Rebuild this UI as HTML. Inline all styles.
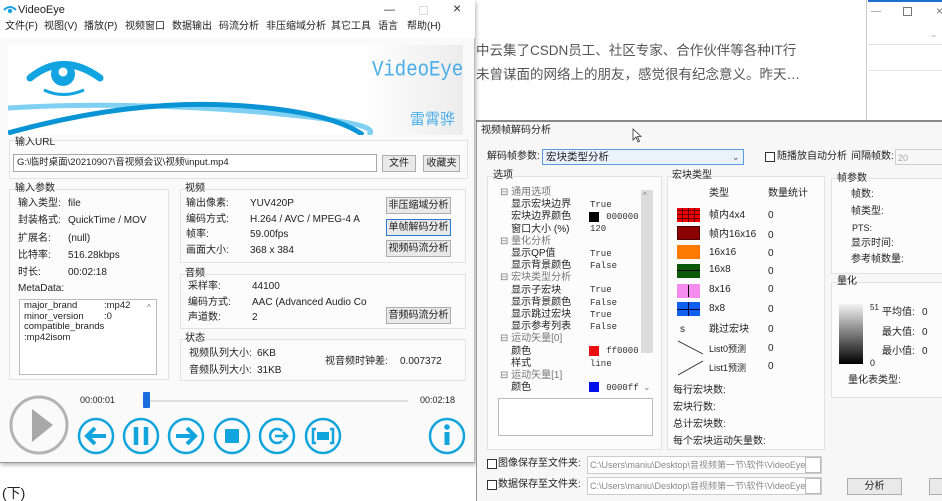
<!DOCTYPE html>
<html><head><meta charset="utf-8"><style>
*{margin:0;padding:0;box-sizing:border-box}
body{width:942px;height:501px;overflow:hidden;background:#fff;font-family:"Liberation Sans","Noto Sans CJK SC",sans-serif;font-size:10px;color:#222;position:relative}
.a{position:absolute;white-space:nowrap;line-height:12px}
.box{position:absolute;border:1px solid #e2e2e2;background:#fbfbfb}
.btn{position:absolute;border:1px solid #adadad;background:#e9e9e9;text-align:center;line-height:14px;font-size:10px}
.inp{position:absolute;border:1px solid #a8a8a8;background:#fff}
.m{font-family:"Liberation Mono","Noto Sans CJK SC",monospace;font-size:9px;color:#333}
.sw{position:absolute;left:677px;width:23px;height:14px}
.g{color:#777}
</style></head><body>
<div class="a" style="left:476px;top:43px;font-size:13.5px;line-height:16px;color:#555">中云集了CSDN员工、社区专家、合作伙伴等各种IT行</div>
<div class="a" style="left:476px;top:67px;font-size:13.5px;line-height:16px;color:#555">未曾谋面的网络上的朋友，感觉很有纪念意义。昨天…</div>
<div style="position:absolute;left:868px;top:0;width:74px;height:2px;background:#1e6fd0"></div>
<div style="position:absolute;left:866px;top:0;width:1px;height:120px;background:#ccc"></div>
<div class="a" style="left:871px;top:6px;color:#888">—</div>
<div style="position:absolute;left:903px;top:7px;width:9px;height:9px;border:1px solid #777"></div>
<div class="a" style="left:936px;top:5px;color:#777;font-size:12px">×</div>
<div class="a" style="left:930px;top:28px;color:#aaa;font-size:9px">⌄</div>
<div style="position:absolute;left:868px;top:44px;width:74px;height:1px;background:#e4e4e4"></div>
<div style="position:absolute;left:868px;top:70px;width:74px;height:1px;background:#e4e4e4"></div>
<div style="position:absolute;left:476px;top:120px;width:466px;height:2px;background:#888"></div>
<div class="a" style="left:2px;top:485px;font-size:14px;line-height:16px">(下)</div>

<div style="position:absolute;left:0;top:0;width:475px;height:463px;background:#fafafa;border-right:1px solid #bbb;border-bottom:1px solid #999;box-shadow:1px 2px 4px rgba(0,0,0,.3)"></div>
<div style="position:absolute;left:0;top:0;width:475px;height:38px;background:#fff"></div>
<svg style="position:absolute;left:3px;top:5px" width="14" height="10" viewBox="0 0 14 10"><path d="M1 5 Q7 -1 13 5" stroke="#1aa0e0" stroke-width="2" fill="none"/><circle cx="7" cy="6" r="2.2" fill="#1aa0e0"/></svg>
<div class="a" style="left:18px;top:4px;font-size:11px">VideoEye</div>
<div class="a" style="left:384px;top:4px;font-size:11px;color:#333">—</div>
<div style="position:absolute;left:419px;top:6px;width:9px;height:9px;border:1px solid #ddd"></div>
<div class="a" style="left:453px;top:2px;font-size:14px;color:#333">×</div>
<div class="a" style="left:5px;top:21px">文件(F)</div>
<div class="a" style="left:44px;top:21px">视图(V)</div>
<div class="a" style="left:84px;top:21px">播放(P)</div>
<div class="a" style="left:125px;top:21px">视频窗口</div>
<div class="a" style="left:172px;top:21px">数据输出</div>
<div class="a" style="left:219px;top:21px">码流分析</div>
<div class="a" style="left:266px;top:21px">非压缩域分析</div>
<div class="a" style="left:331px;top:21px">其它工具</div>
<div class="a" style="left:378px;top:21px">语言</div>
<div class="a" style="left:407px;top:21px">帮助(H)</div>
<div style="position:absolute;left:8px;top:45px;width:455px;height:90px;background:linear-gradient(90deg,#fff 0%,#fff 78%,#ececec 100%);overflow:hidden">
<svg width="455" height="90" viewBox="0 0 455 90">
<path d="M22 33 Q55 6 92 33" stroke="#12a4e0" stroke-width="7" fill="none" stroke-linecap="round"/>
<circle cx="55" cy="29" r="12" fill="#12a4e0"/><circle cx="55" cy="27" r="4.5" fill="#fff"/>
<path d="M36 45 Q55 54 76 45" stroke="#12a4e0" stroke-width="3" fill="none"/>
<path d="M0 63 Q120 56 250 67 T360 90" stroke="#7fd0f2" stroke-width="5" fill="none"/>
<path d="M0 88 Q120 55 220 60 T355 90" stroke="#0a94d6" stroke-width="5" fill="none"/>
</svg>
<div class="a" style="left:364px;top:14px;font-family:'Liberation Mono',monospace;font-size:19px;line-height:22px;color:#4aaeea;transform:scaleY(1.15)">VideoEye</div>
<div class="a" style="left:402px;top:66px;font-size:15px;line-height:18px;color:#4aaeea">雷霄骅</div>
</div>
<div class="box" style="left:9px;top:140px;width:459px;height:39px"></div>
<div class="a" style="left:15px;top:137px">输入URL</div>
<div class="inp" style="left:13px;top:154px;width:364px;height:18px"></div>
<div class="a" style="left:17px;top:157px;font-size:9.5px">G:\临时桌面\20210907\音视频会议\视频\input.mp4</div>
<div class="btn" style="left:382px;top:155px;width:34px;height:17px;line-height:15px">文件</div>
<div class="btn" style="left:423px;top:155px;width:37px;height:17px;line-height:15px">收藏夹</div>
<div class="box" style="left:9px;top:189px;width:160px;height:191px"></div>
<div class="a" style="left:15px;top:183px">输入参数</div>
<div class="a" style="left:18px;top:198px">输入类型:</div><div class="a" style="left:68px;top:198px">file</div>
<div class="a" style="left:18px;top:215px">封装格式:</div><div class="a" style="left:68px;top:215px">QuickTime / MOV</div>
<div class="a" style="left:18px;top:233px">扩展名:</div><div class="a" style="left:68px;top:233px">(null)</div>
<div class="a" style="left:18px;top:250px">比特率:</div><div class="a" style="left:68px;top:250px">516.28kbps</div>
<div class="a" style="left:18px;top:267px">时长:</div><div class="a" style="left:68px;top:267px">00:02:18</div>
<div class="a" style="left:18px;top:283px">MetaData:</div>
<div class="inp" style="left:19px;top:299px;width:138px;height:76px;border-color:#bbb"></div>
<div class="a" style="left:24px;top:301px;line-height:10.5px;font-size:9.5px">major_brand<br>minor_version<br>compatible_brands<br>:mp42isom</div>
<div class="a" style="left:104px;top:301px;line-height:10.5px;font-size:9.5px">:mp42<br>:0</div>
<div class="a g" style="left:147px;top:302px;font-size:8px">^</div>
<div class="box" style="left:180px;top:189px;width:286px;height:74px"></div>
<div class="a" style="left:185px;top:183px">视频</div>
<div class="a" style="left:186px;top:198px">输出像素:</div><div class="a" style="left:250px;top:198px">YUV420P</div>
<div class="a" style="left:186px;top:214px">编码方式:</div><div class="a" style="left:250px;top:214px">H.264 / AVC / MPEG-4 A</div>
<div class="a" style="left:186px;top:229px">帧率:</div><div class="a" style="left:250px;top:229px">59.00fps</div>
<div class="a" style="left:186px;top:245px">画面大小:</div><div class="a" style="left:250px;top:245px">368 x 384</div>
<div class="btn" style="left:386px;top:197px;width:65px;height:17px;line-height:15px">非压缩域分析</div>
<div class="btn" style="left:386px;top:219px;width:65px;height:17px;line-height:15px;border:1px solid #2a7ad5">单帧解码分析</div>
<div class="btn" style="left:386px;top:240px;width:65px;height:17px;line-height:15px">视频码流分析</div>
<div class="box" style="left:180px;top:274px;width:286px;height:55px"></div>
<div class="a" style="left:185px;top:268px">音频</div>
<div class="a" style="left:188px;top:281px">采样率:</div><div class="a" style="left:252px;top:281px">44100</div>
<div class="a" style="left:188px;top:297px">编码方式:</div><div class="a" style="left:252px;top:297px">AAC (Advanced Audio Co</div>
<div class="a" style="left:188px;top:312px">声道数:</div><div class="a" style="left:252px;top:312px">2</div>
<div class="btn" style="left:386px;top:307px;width:65px;height:17px;line-height:15px">音频码流分析</div>
<div class="box" style="left:180px;top:339px;width:286px;height:42px"></div>
<div class="a" style="left:185px;top:333px">状态</div>
<div class="a" style="left:189px;top:348px">视频队列大小:</div><div class="a" style="left:257px;top:348px">6KB</div>
<div class="a" style="left:189px;top:365px">音频队列大小:</div><div class="a" style="left:257px;top:365px">31KB</div>
<div class="a" style="left:325px;top:356px">视音频时钟差:</div><div class="a" style="left:400px;top:356px">0.007372</div>
<div class="a" style="left:80px;top:394px;font-size:9px">00:00:01</div>
<div class="a" style="left:420px;top:394px;font-size:9px">00:02:18</div>
<div style="position:absolute;left:143px;top:400px;width:265px;height:2px;background:#e0e0e0"></div>
<div style="position:absolute;left:143px;top:392px;width:7px;height:16px;background:#1a6fe0;border-radius:1px"></div>
<svg style="position:absolute;left:0;top:390px" width="475" height="72" viewBox="0 390 475 72">
<circle cx="39" cy="425" r="28" stroke="#b3b3b3" stroke-width="3" fill="none"/>
<path d="M32 409 L53 425 L32 442Z" fill="#a8a8a8"/>
<g stroke="#12a4dc" fill="none" stroke-width="2.5">
<circle cx="96" cy="436" r="17"/><circle cx="141" cy="436" r="17"/><circle cx="186" cy="436" r="17"/><circle cx="232" cy="436" r="17"/><circle cx="277" cy="436" r="17"/><circle cx="323" cy="436" r="17"/><circle cx="447" cy="436" r="17"/>
<path d="M106 436 H87 M95 428 L87 436 L95 444" stroke-width="4"/>
<path d="M136 427 V445 M146 427 V445" stroke-width="4.5"/>
<path d="M176 436 H195 M187 428 L195 436 L187 444" stroke-width="4"/>
<path d="M282 431 A7 7 0 1 0 282 441" stroke-width="2.5"/><path d="M275 436 H287 M283 432 L287 436 L283 440" stroke-width="2.5"/>
<path d="M316 429 H313 V443 H316 M330 429 H333 V443 H330" stroke-width="2.5"/>
</g>
<rect x="225" y="429" width="14" height="14" fill="#12a4dc"/>
<rect x="317" y="432" width="12" height="8" fill="#12a4dc"/>
<circle cx="447" cy="427" r="2.8" fill="#12a4dc"/><rect x="444.5" y="432" width="5" height="13" fill="#12a4dc"/>
</svg>

<div style="position:absolute;left:476px;top:122px;width:466px;height:379px;background:#f7f7f7;border-left:1px solid #999"></div>
<div class="a" style="left:481px;top:125px">视频帧解码分析</div>
<svg style="position:absolute;left:632px;top:128px" width="10" height="15" viewBox="0 0 10 15"><path d="M1 1 V12 L4 9 L6 14 L7.5 13.3 L5.5 8.5 L9 8.5Z" fill="#fff" stroke="#333" stroke-width=".8"/></svg>
<div class="a" style="left:487px;top:151px">解码帧参数:</div>
<div class="inp" style="left:542px;top:149px;width:202px;height:16px;border-color:#5a9ae0;background:#eaf3fc"></div>
<div class="a" style="left:546px;top:151px;font-size:10.5px">宏块类型分析</div>
<div class="a" style="left:732px;top:151px;color:#555;font-size:9px">⌄</div>
<div style="position:absolute;left:765px;top:152px;width:10px;height:10px;border:1px solid #333;background:#fff"></div>
<div class="a" style="left:777px;top:151px">随播放自动分析</div>
<div class="a" style="left:851px;top:151px">间隔帧数:</div>
<div class="inp" style="left:895px;top:149px;width:50px;height:16px;border-color:#ccc;background:#f7f7f7"></div>
<div class="a" style="left:898px;top:152px;color:#aaa;font-size:9px">20</div>
<div class="box" style="left:487px;top:176px;width:175px;height:274px;background:#fcfcfc"></div>
<div class="a" style="left:493px;top:170px">选项</div>
<div style="position:absolute;left:641px;top:190px;width:12px;height:163px;background:#dcdcdc"></div>
<div class="a g" style="left:643px;top:190px;font-size:8px">^</div>
<div class="a g" style="left:643px;top:381px;font-size:9px">⌄</div>
<div class="a" style="left:500px;top:187px;line-height:12.2px"><span class="g">⊟ 通用选项</span><br>&nbsp;&nbsp;&nbsp;&nbsp;显示宏块边界<br>&nbsp;&nbsp;&nbsp;&nbsp;宏块边界颜色<br>&nbsp;&nbsp;&nbsp;&nbsp;窗口大小 (%)<br><span class="g">⊟ 量化分析</span><br>&nbsp;&nbsp;&nbsp;&nbsp;显示QP值<br>&nbsp;&nbsp;&nbsp;&nbsp;显示背景颜色<br><span class="g">⊟ 宏块类型分析</span><br>&nbsp;&nbsp;&nbsp;&nbsp;显示子宏块<br>&nbsp;&nbsp;&nbsp;&nbsp;显示背景颜色<br>&nbsp;&nbsp;&nbsp;&nbsp;显示跳过宏块<br>&nbsp;&nbsp;&nbsp;&nbsp;显示参考列表<br><span class="g">⊟ 运动矢量[0]</span><br>&nbsp;&nbsp;&nbsp;&nbsp;颜色<br>&nbsp;&nbsp;&nbsp;&nbsp;样式<br><span class="g">⊟ 运动矢量[1]</span><br>&nbsp;&nbsp;&nbsp;&nbsp;颜色</div>
<div class="a m" style="left:590px;top:199px;line-height:12.2px">True<br>&nbsp;&nbsp;&nbsp;000000<br>120<br><br>True<br>False<br><br>True<br>False<br>True<br>False<br><br>&nbsp;&nbsp;&nbsp;ff0000<br>line<br><br>&nbsp;&nbsp;&nbsp;0000ff</div>
<div style="position:absolute;left:589px;top:212px;width:10px;height:10px;background:#000"></div>
<div style="position:absolute;left:589px;top:346px;width:10px;height:10px;background:#e81010"></div>
<div style="position:absolute;left:589px;top:382px;width:10px;height:10px;background:#0010e8"></div>
<div class="inp" style="left:498px;top:398px;width:155px;height:38px;border-color:#bbb"></div>
<div class="box" style="left:667px;top:176px;width:158px;height:274px;background:#fcfcfc"></div>
<div class="a" style="left:672px;top:170px">宏块类型</div>
<div class="a" style="left:709px;top:188px">类型</div><div class="a" style="left:768px;top:188px">数量统计</div>
<div class="sw" style="top:208px;background:repeating-linear-gradient(90deg,#e00 0 5px,#600 5px 6px),#e00"><div style="position:absolute;inset:0;background:repeating-linear-gradient(0deg,transparent 0 3px,#600 3px 4px)"></div></div>
<div class="sw" style="top:226px;background:#8b0000;border:1px solid #500"></div>
<div class="sw" style="top:245px;background:#ff7a00"></div>
<div class="sw" style="top:264px;background:#0a5a0a"><div style="position:absolute;left:0;right:0;top:6px;height:1px;background:#000"></div></div>
<div class="sw" style="top:284px;background:#f58cf0"><div style="position:absolute;left:11px;top:1px;bottom:1px;width:1px;background:#000"></div></div>
<div class="sw" style="top:302px;background:#1060f0"><div style="position:absolute;left:11px;top:0;bottom:0;width:1px;background:#003"></div><div style="position:absolute;left:0;right:0;top:7px;height:1px;background:#003"></div></div>
<div class="a" style="left:709px;top:210px">帧内4x4</div><div class="a" style="left:768px;top:210px">0</div>
<div class="a" style="left:709px;top:229px">帧内16x16</div><div class="a" style="left:768px;top:230px">0</div>
<div class="a" style="left:709px;top:247px">16x16</div><div class="a" style="left:768px;top:248px">0</div>
<div class="a" style="left:709px;top:264px">16x8</div><div class="a" style="left:768px;top:266px">0</div>
<div class="a" style="left:709px;top:284px">8x16</div><div class="a" style="left:768px;top:284px">0</div>
<div class="a" style="left:709px;top:303px">8x8</div><div class="a" style="left:768px;top:304px">0</div>
<div class="a" style="left:680px;top:324px">s</div><div class="a" style="left:709px;top:324px">跳过宏块</div><div class="a" style="left:768px;top:324px">0</div>
<svg style="position:absolute;left:677px;top:340px" width="28" height="36"><path d="M1 1 L26 14 M26 21 L1 35" stroke="#222" stroke-width=".8"/></svg>
<div class="a" style="left:709px;top:343px;font-size:9px">List0预测</div><div class="a" style="left:768px;top:343px">0</div>
<div class="a" style="left:709px;top:362px;font-size:9px">List1预测</div><div class="a" style="left:768px;top:361px">0</div>
<div class="a" style="left:673px;top:385px">每行宏块数:</div>
<div class="a" style="left:673px;top:402px">宏块行数:</div>
<div class="a" style="left:673px;top:419px">总计宏块数:</div>
<div class="a" style="left:673px;top:436px">每个宏块运动矢量数:</div>
<div class="box" style="left:831px;top:178px;width:115px;height:96px;background:#fcfcfc"></div>
<div class="a" style="left:837px;top:173px">帧参数</div>
<div class="a" style="left:851px;top:189px">帧数:</div>
<div class="a" style="left:851px;top:206px">帧类型:</div>
<div class="a" style="left:852px;top:222px;font-size:9px">PTS:</div>
<div class="a" style="left:851px;top:238px">显示时间:</div>
<div class="a" style="left:851px;top:254px">参考帧数量:</div>
<div class="box" style="left:831px;top:282px;width:115px;height:116px;background:#fcfcfc"></div>
<div class="a" style="left:837px;top:276px">量化</div>
<div style="position:absolute;left:839px;top:304px;width:24px;height:60px;background:linear-gradient(#f4f4f4,#000)"></div>
<div class="a" style="left:870px;top:302px;font-size:8px">51</div>
<div class="a" style="left:870px;top:357px;font-size:9px">0</div>
<div class="a" style="left:882px;top:307px">平均值:</div><div class="a" style="left:922px;top:307px">0</div>
<div class="a" style="left:882px;top:327px">最大值:</div><div class="a" style="left:922px;top:327px">0</div>
<div class="a" style="left:882px;top:346px">最小值:</div><div class="a" style="left:922px;top:346px">0</div>
<div class="a" style="left:848px;top:375px">量化表类型:</div>
<div style="position:absolute;left:487px;top:459px;width:10px;height:10px;border:1px solid #333;background:#fff"></div>
<div class="a" style="left:498px;top:458px">图像保存至文件夹:</div>
<div class="inp" style="left:587px;top:456px;width:235px;height:18px;border-color:#ccc"></div>
<div class="a" style="left:590px;top:459px;font-size:9px;color:#888">C:\Users\maniu\Desktop\音视频第一节\软件\VideoEye_此</div>
<div class="inp" style="left:805px;top:457px;width:16px;height:16px;border-color:#bbb"></div>
<div style="position:absolute;left:487px;top:480px;width:10px;height:10px;border:1px solid #333;background:#fff"></div>
<div class="a" style="left:498px;top:479px">数据保存至文件夹:</div>
<div class="inp" style="left:587px;top:477px;width:235px;height:18px;border-color:#ccc"></div>
<div class="a" style="left:590px;top:480px;font-size:9px;color:#888">C:\Users\maniu\Desktop\音视频第一节\软件\VideoEye_此</div>
<div class="inp" style="left:805px;top:478px;width:16px;height:16px;border-color:#bbb"></div>
<div class="btn" style="left:847px;top:478px;width:55px;height:17px;line-height:15px">分析</div>
<div class="btn" style="left:929px;top:478px;width:20px;height:17px"></div>
</body></html>
